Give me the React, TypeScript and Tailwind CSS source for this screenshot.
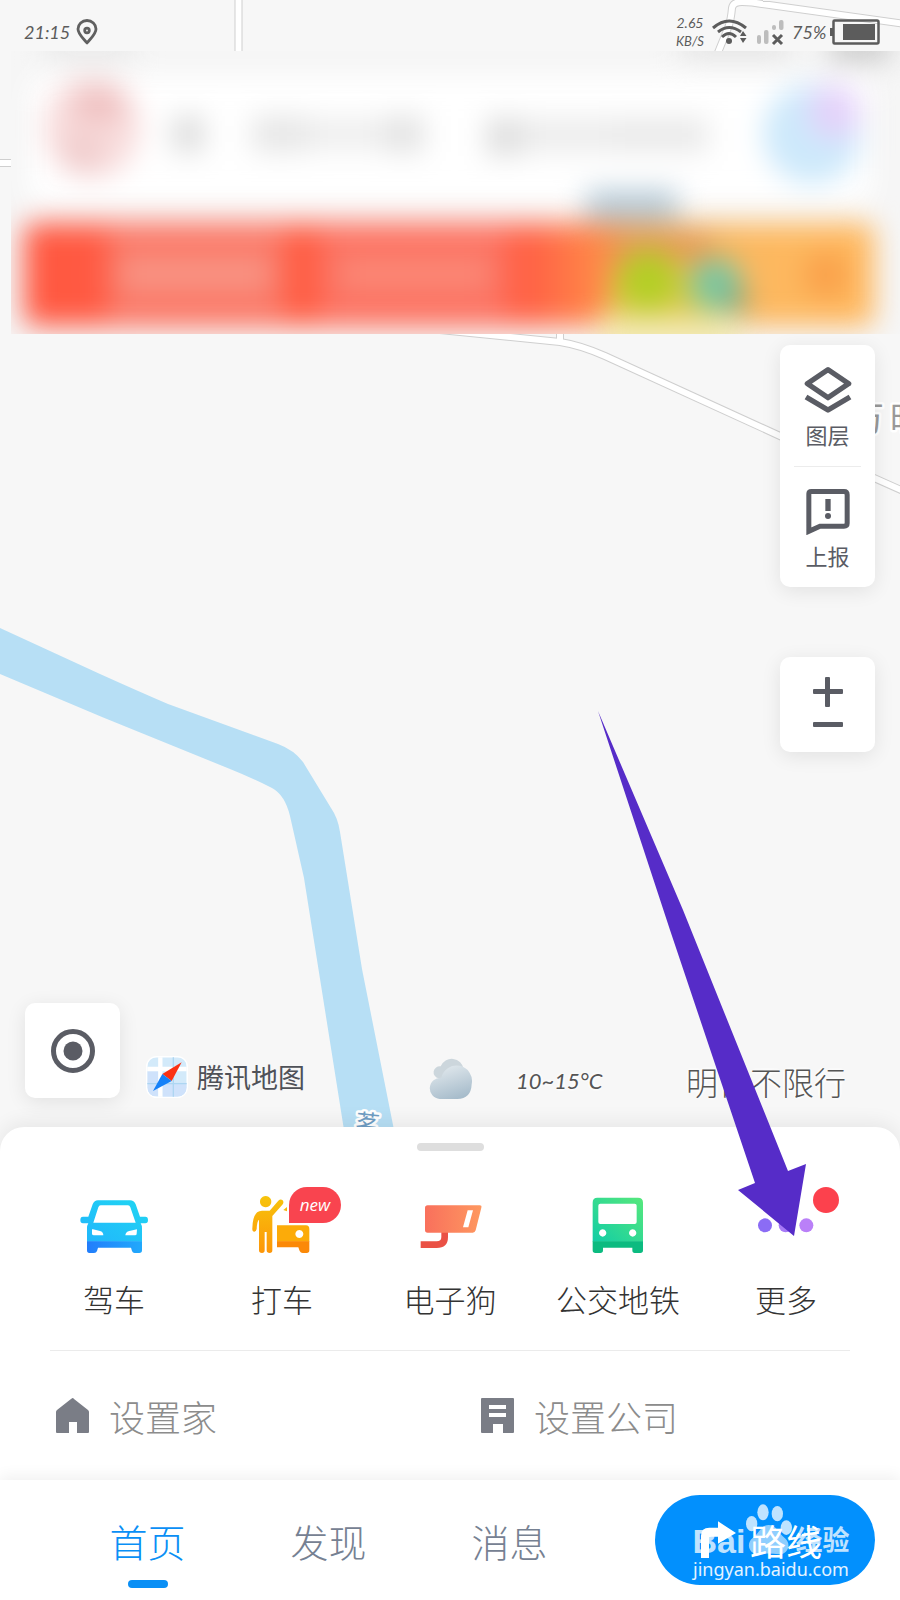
import type { ReactNode } from "react";

const narrow = "font-['Liberation_Sans_Narrow','Lato',sans-serif]";

function MapCanvas() {
  const roads = [
    "M238.500 -5V60",
    "M-5 163H20",
    "M715 60L728 28Q731 20 732 8Q733 2 742 2Q752 2 762 4L905 24",
    "M420 328L560 342Q580 345 605 356L780 436L910 494",
    "M560 325V340",
  ];
  return (
    <svg
      className="absolute inset-0 h-full w-full"
      viewBox="0 0 900 1600"
      preserveAspectRatio="xMidYMin slice"
      aria-hidden="true"
    >
      <g fill="none" stroke="#cfcfcf" strokeWidth="8">
        {roads.map((d) => (
          <path key={d} d={d} />
        ))}
      </g>
      <g fill="none" stroke="#fff" strokeWidth="6">
        {roads.map((d) => (
          <path key={d} d={d} />
        ))}
      </g>
      <path
        fill="#b7dff5"
        d="M0 628L100 674Q140 692 168 704L278 744Q294 750 303 762L331 808Q338 818 340 832L362 969L394 1130H344L304 878L290 816Q285 795 272 788Q250 777 230 769L102 717L0 674Z"
      />
      <g
        fontFamily="'Noto Sans CJK SC', sans-serif"
        stroke="#fff"
        strokeWidth="5"
        paintOrder="stroke"
        strokeLinejoin="round"
      >
        <text x="356" y="1132" fontSize="24" fill="#6f9dc4" transform="rotate(6 368 1120)">
          茗
        </text>
        <text x="850" y="431" fontSize="34" fill="#999">
          万
        </text>
        <text x="890" y="431" fontSize="34" fill="#999">
          旺
        </text>
      </g>
    </svg>
  );
}

function StatusBar() {
  return (
    <header className={`relative flex h-[51px] items-center pt-3 pl-6 pr-5 text-[#5c5c5c] ${narrow}`}>
      <time className="w-[44px] text-[18px] leading-6 italic">21:15</time>
      <svg className="ml-2 h-[26px] w-[22px]" viewBox="0 0 22 26" fill="none" stroke="#606060" strokeWidth="2.800">
        <path d="M11 24C7 19 2 15 2 10A9 8.500 0 0 1 20 10C20 15 15 19 11 24Z" strokeLinejoin="round" />
        <circle cx="11" cy="11.500" r="2.300" />
      </svg>
      <div className="ml-auto flex items-center">
        <div className="flex w-[30px] flex-col items-center text-[14px] leading-[18px] italic">
          <span>2.65</span>
          <span className="text-[13px]">KB/S</span>
        </div>
        <svg className="ml-1.5 h-[28px] w-[37px]" viewBox="0 0 37 28" fill="none" stroke="#5c5c5c" strokeWidth="3">
          <path d="M2 10Q18 -4 35 10M7 14Q18 5 30 14M11 19Q18 12 25 19" />
          <circle cx="18" cy="23" r="3" fill="#5c5c5c" stroke="none" />
          <path d="M29 18L32 13L35.500 18ZM29 20L32 25L35.500 20Z" fill="#5c5c5c" stroke="none" />
        </svg>
        <svg className="ml-2 h-[28px] w-[28px]" viewBox="0 0 28 28" fill="#bdbdbd">
          <rect x="1" y="17" width="4" height="9" rx="2" />
          <rect x="8" y="12" width="4.500" height="14" rx="2" />
          <rect x="16" y="7" width="4" height="5" rx="2" />
          <rect x="23" y="2" width="4.500" height="10" rx="2" />
          <path d="M17 17L26 26M26 17L17 26" stroke="#5c5c5c" strokeWidth="3" />
        </svg>
        <span className="ml-2 w-[38px] text-[18px] leading-6 italic">75%</span>
        <svg className="h-[26px] w-[50px]" viewBox="0 0 50 26">
          <path d="M3.500 2.500V23.500Q3.500 24.500 4.500 24.500H47Q48.500 24.500 48.500 23V3Q48.500 1.500 47 1.500H4.500Q3.500 1.500 3.500 2.500Z" fill="none" stroke="#5c5c5c" strokeWidth="2.500" />
          <rect x="0" y="9" width="3" height="8" fill="#5c5c5c" />
          <rect x="13" y="5" width="32" height="16" fill="#5c5c5c" />
        </svg>
      </div>
    </header>
  );
}

function FrostedHeader() {
  return (
    <svg
      className="relative ml-[11px] block h-[283px] w-[calc(100%-11px)]"
      viewBox="11 51 889 283"
      preserveAspectRatio="none"
      aria-hidden="true"
    >
      <defs>
        <filter id="soft" filterUnits="userSpaceOnUse" x="-80" y="-40" width="1080" height="480" colorInterpolationFilters="sRGB">
          <feGaussianBlur stdDeviation="14" />
        </filter>
        <linearGradient id="banner" gradientUnits="userSpaceOnUse" x1="22" y1="0" x2="872" y2="0">
          <stop offset="0" stopColor="#ff5841" />
          <stop offset="0.600" stopColor="#ff6246" />
          <stop offset="0.680" stopColor="#ff8a48" />
          <stop offset="0.780" stopColor="#f3b45e" />
          <stop offset="0.860" stopColor="#fcb860" />
          <stop offset="1" stopColor="#ffb75c" />
        </linearGradient>
      </defs>
      <rect x="11" y="51" width="889" height="283" fill="#f6f6f6" />
      <g filter="url(#soft)">
        <rect x="28" y="76" width="844" height="128" rx="14" fill="#fff" />
        <rect x="45" y="36" width="90" height="20" fill="#e4e4e4" />
        <rect x="680" y="34" width="110" height="22" fill="#e0e0e0" />
        <rect x="830" y="34" width="60" height="26" fill="#c4c4c4" />
        <ellipse cx="92" cy="128" rx="48" ry="50" fill="#f8dcdc" />
        <ellipse cx="99" cy="104" rx="28" ry="18" fill="#efc0c0" />
        <ellipse cx="82" cy="152" rx="20" ry="20" fill="#f0cccc" />
        <rect x="172" y="116" width="32" height="36" fill="#dcdcdc" />
        <rect x="252" y="116" width="56" height="36" fill="#e6e6e6" />
        <rect x="308" y="118" width="80" height="32" fill="#eeeeee" />
        <rect x="386" y="116" width="38" height="36" fill="#e2e2e2" />
        <rect x="486" y="118" width="36" height="38" fill="#dedede" />
        <rect x="522" y="118" width="90" height="34" fill="#ececec" />
        <rect x="612" y="118" width="96" height="34" fill="#e9e9e9" />
        <ellipse cx="812" cy="134" rx="49" ry="50" fill="#cde9fb" />
        <ellipse cx="834" cy="112" rx="26" ry="28" fill="#e4d2fa" />
        <rect x="24" y="223" width="850" height="103" rx="10" fill="url(#banner)" />
        <rect x="108" y="228" width="176" height="92" fill="#fa7a69" />
        <rect x="120" y="260" width="150" height="28" fill="#f99787" />
        <rect x="320" y="228" width="186" height="92" fill="#fc7363" />
        <rect x="340" y="260" width="150" height="28" fill="#fa8a78" />
        <rect x="586" y="190" width="92" height="32" fill="#b5c9d6" />
        <rect x="610" y="230" width="100" height="30" fill="#e49c56" />
        <rect x="600" y="312" width="140" height="60" fill="#f4ebb8" />
        <rect x="610" y="270" width="110" height="48" fill="#e0c850" />
        <circle cx="648" cy="280" r="30" fill="#b3cf25" />
        <circle cx="716" cy="284" r="26" fill="#79c7a3" />
        <circle cx="736" cy="303" r="11" fill="#7a9b75" />
        <circle cx="826" cy="275" r="22" fill="#f99f49" />
      </g>
    </svg>
  );
}

function SideButton({ label, children }: { label: string; children: ReactNode }) {
  return (
    <button type="button" className="flex h-[121px] flex-col items-center pt-[21px] text-[22px] leading-7 text-[#5a5c64]">
      {children}
      <span className="mt-1.5">{label}</span>
    </button>
  );
}

const card = "rounded-[10px] bg-white shadow-[0_4px_20px_rgba(0,0,0,0.090)]";

function MapControls() {
  return (
    <div className="flex flex-col items-end gap-[70px] pt-[11px] pr-[25px]">
      <div className={`flex w-[95px] flex-col ${card}`}>
        <SideButton label="图层">
          <svg className="h-[48px] w-[48px]" viewBox="0 0 144 144" fill="none" stroke="#5a5c64" strokeWidth="16" strokeLinejoin="round">
            <path d="M72 11L134 53L72 95L10 53Z" />
            <path d="M6 93L72 132L138 93" />
          </svg>
        </SideButton>
        <hr className="mx-3.5 -mb-px border-[#ececec]" />
        <SideButton label="上报">
          <svg className="h-[48px] w-[48px]" viewBox="0 0 144 144">
            <path d="M14.500 20.500Q14.500 13.500 22 13.500H120Q129.500 13.500 129.500 23V109Q129.500 117.500 120 117.500H48L14.500 133Z" fill="none" stroke="#5a5c64" strokeWidth="15" />
            <path d="M64 36H80V72H64Z" fill="#5a5c64" />
            <circle cx="72" cy="87" r="9" fill="#5a5c64" />
          </svg>
        </SideButton>
      </div>
      <div className={`flex w-[95px] flex-col items-center py-[15px] ${card}`}>
        <button type="button" aria-label="放大" className="flex h-10 w-full items-center justify-center">
          <svg className="h-[30px] w-[30px]" viewBox="0 0 30 30" fill="#5a5c64">
            <rect x="12" y="0" width="5" height="30" rx="1" />
            <rect x="0" y="12" width="30" height="5" rx="1" />
          </svg>
        </button>
        <button type="button" aria-label="缩小" className="flex h-[25px] w-full items-center justify-center">
          <svg className="h-[5px] w-[30px]" viewBox="0 0 30 5" fill="#5a5c64">
            <rect width="30" height="5" rx="1" />
          </svg>
        </button>
      </div>
    </div>
  );
}

function MapFooter() {
  const halo = "[text-shadow:0_0_4px_#fff,0_0_4px_#fff,0_0_4px_#fff]";
  return (
    <div className="mt-auto flex items-end pb-[22px] pl-[25px] pr-[54px]">
      <button type="button" aria-label="定位" className={`mb-[7px] flex h-[95px] w-[95px] items-center justify-center ${card}`}>
        <svg className="h-[44px] w-[44px]" viewBox="0 0 44 44">
          <circle cx="22" cy="22" r="19.500" fill="none" stroke="#5a5c64" strokeWidth="5" />
          <circle cx="22" cy="22" r="9.500" fill="#5a5c64" />
        </svg>
      </button>
      <div className="mb-[7px] ml-[26px] flex items-center gap-[9px]">
        <svg className="h-[42px] w-[42px]" viewBox="438 230 126 126">
          <rect x="438" y="230" width="126" height="126" rx="32" fill="#fff" />
          <clipPath id="logoClip">
            <rect x="442" y="234" width="118" height="118" rx="28" />
          </clipPath>
          <g clipPath="url(#logoClip)">
            <rect x="442" y="234" width="118" height="118" fill="#d3eafa" />
            <path d="M442 276H474V350H442ZM488 310H560V352H488Z" fill="#cfe2fb" />
            <path d="M481 230V356M438 269H564" stroke="#fff" strokeWidth="13" />
            <path d="M520 230V356M438 313H564" stroke="#add6f2" strokeWidth="4" />
          </g>
          <path d="M545 249L487 284L515 305Z" fill="#fb3213" />
          <path d="M459 335L487 284L515 305Z" fill="#1581f8" />
        </svg>
        <span className="text-[27px] leading-10 text-[#4f5158]">腾讯地图</span>
      </div>
      <div className={`ml-auto flex items-center text-[#555] ${halo}`}>
        <svg className="h-[48px] w-[48px]" viewBox="80 60 144 144">
          <defs>
            <linearGradient id="cloudFront" x1="0.200" y1="0" x2="0.600" y2="1">
              <stop offset="0" stopColor="#e3eaee" />
              <stop offset="1" stopColor="#a7bccb" />
            </linearGradient>
          </defs>
          <path d="M118 124A18 18 0 1 1 124 88A36 36 0 0 1 193 96L180 124Z" fill="#ccd6dc" />
          <path d="M121 186A32 32 0 1 1 126 122A46 46 0 0 1 217 142Q215 186 174 186Z" fill="url(#cloudFront)" />
        </svg>
        <span className={`ml-[42px] w-[92px] text-[22px] leading-10 italic ${narrow}`}>10~15°C</span>
        <span className="ml-[78px] text-[32px] leading-10 font-light">明日不限行</span>
      </div>
    </div>
  );
}

function CarIcon() {
  return (
    <svg className="h-[70px] w-[70px]" viewBox="87 50 210 210">
      <defs>
        <linearGradient id="carTop" x1="0" y1="1" x2="1" y2="0">
          <stop offset="0" stopColor="#21b5fc" />
          <stop offset="1" stopColor="#20d6f2" />
        </linearGradient>
        <linearGradient id="carBase" x1="0" y1="0" x2="1" y2="0">
          <stop offset="0" stopColor="#227dfb" />
          <stop offset="1" stopColor="#21a9fc" />
        </linearGradient>
      </defs>
      <path
        fill="url(#carTop)"
        fillRule="evenodd"
        d="M144 90H240Q252 90 257 102L270 139H286Q294 139 294 149Q294 159 286 159H272Q276 165 276 174V214H111V174Q111 165 115 159H99Q91 159 91 149Q91 139 99 139H115L128 102Q133 90 144 90ZM152 105Q147 105 145 111L130 157H257L241 111Q239 105 234 105ZM126 177V190Q126 195 132 195H160Q160 184 150 182L129 177ZM261 177L238 182Q227 184 226 195H255Q260 195 260 190Z"
      />
      <path fill="url(#carBase)" d="M111 213H276V240Q276 248 268 248H254Q248 248 246 242L243 232H144L141 242Q139 248 132 248H118Q111 248 111 240Z" />
    </svg>
  );
}

function TaxiIcon() {
  return (
    <span className="relative block">
      <svg className="h-[70px] w-[70px]" viewBox="591 50 210 210">
        <defs>
          <linearGradient id="taxi" x1="0" y1="0" x2="0" y2="1">
            <stop offset="0" stopColor="#f7c40c" />
            <stop offset="1" stopColor="#fd9608" />
          </linearGradient>
        </defs>
        <path
          fill="url(#taxi)"
          d="M647 77A17 17 0 1 1 646.900 77ZM636 121H659L685 91Q692 84 698 90Q703 96 697 103L667 137V240Q667 248 659 248Q650 248 650 240V185H644V240Q644 248 636 248Q627 248 627 240V148Q621 152 620 176Q619 184 612 184Q606 183 607 174Q608 121 636 121Z"
        />
        <path fill="#fcab09" fillRule="evenodd" d="M681 165H768Q778 165 778 176V214H681ZM748 179A12 12 0 1 0 748.100 179Z" />
        <path fill="#fb8908" d="M681 213H778V240Q778 248 770 248H758Q752 248 749 242L745 231H681Z" />
        <path fill="#f7b80c" d="M700 119L711 110V123Z" />
      </svg>
      <span className="absolute top-0 left-[42px] flex h-9 w-[52px] items-center justify-center rounded-t-[18px] rounded-br-[18px] bg-[#f9444f] font-['Open_Sans',sans-serif] text-[17px] leading-6 font-medium text-white italic">
        new
      </span>
    </span>
  );
}

function CameraIcon() {
  return (
    <svg className="h-[70px] w-[70px]" viewBox="105 50 210 210">
      <defs>
        <linearGradient id="cam" x1="0" y1="0" x2="1" y2="0">
          <stop offset="0" stopColor="#f9705c" />
          <stop offset="1" stopColor="#fe9860" />
        </linearGradient>
      </defs>
      <path d="M122 223H170Q194 223 194 200V184" fill="none" stroke="#ea5145" strokeWidth="20" />
      <path fill="url(#cam)" fillRule="evenodd" d="M143 105H299Q306 105 304 112L287 180Q285 187 278 187H143Q135 187 135 179V113Q135 105 143 105ZM263 120L249 171H265L279 120Z" />
    </svg>
  );
}

function BusIcon() {
  return (
    <svg className="h-[70px] w-[70px]" viewBox="609 50 210 210">
      <defs>
        <linearGradient id="bus" x1="0" y1="1" x2="1" y2="0">
          <stop offset="0" stopColor="#11cda5" />
          <stop offset="1" stopColor="#57e87c" />
        </linearGradient>
      </defs>
      <path
        fill="url(#bus)"
        fillRule="evenodd"
        d="M652 82H774Q789 82 789 97V214H638V97Q638 82 652 82ZM661 100Q655 100 655 106V155Q655 161 661 161H764Q770 161 770 155V106Q770 100 764 100ZM668 177A11 11 0 1 0 668.100 177ZM758 177A11 11 0 1 0 758.100 177Z"
      />
      <path fill="#0cbb80" d="M638 213H789V240Q789 248 781 248H764Q757 248 757 240V232H669V240Q669 248 661 248H646Q638 248 638 240Z" />
    </svg>
  );
}

function MoreIcon() {
  return (
    <span className="relative block">
      <svg className="h-[70px] w-[70px]" viewBox="1113 50 210 210">
        <circle cx="1155" cy="165" r="21" fill="#8b6cf5" />
        <circle cx="1217" cy="165" r="21" fill="#a77af7" />
        <circle cx="1279" cy="165" r="21" fill="#ba80f8" />
      </svg>
      <span className="absolute top-0 left-[62px] h-[26px] w-[26px] rounded-full bg-[#fc414d]" />
    </span>
  );
}

const shortcuts = [
  { label: "驾车", icon: <CarIcon /> },
  { label: "打车", icon: <TaxiIcon /> },
  { label: "电子狗", icon: <CameraIcon /> },
  { label: "公交地铁", icon: <BusIcon /> },
  { label: "更多", icon: <MoreIcon /> },
];

function BottomSheet() {
  return (
    <section className="relative flex flex-col rounded-t-[24px] bg-white pt-4 shadow-[0_-4px_20px_rgba(0,0,0,0.070)]">
      <div className="mx-auto h-2 w-[67px] rounded-full bg-[#dedede]" />
      <div className="mt-9 grid grid-cols-5 px-[30px]">
        {shortcuts.map(({ label, icon }) => (
          <button key={label} type="button" className="flex flex-col items-center text-[31px] leading-10 font-light whitespace-nowrap text-[#333]">
            {icon}
            <span className="mt-[22px]">{label}</span>
          </button>
        ))}
      </div>
      <hr className="mx-[50px] mt-[31px] border-[#ebebeb]" />
      <div className="grid h-[129px] grid-cols-2 items-center pl-[56px] pr-[50px] text-[36px] leading-[48px] font-light text-[#8c8c8c]">
        <button type="button" className="flex items-center gap-5">
          <svg className="h-[35px] w-[33px]" viewBox="0 0 33 35" fill="#7a7d86">
            <path d="M16.500 0Q17.500 0 18 1L32 12Q33 13 33 14V34Q33 35 32 35H21V24H13V35H1Q0 35 0 34V14Q0 13 1 12L15 1Z" />
          </svg>
          设置家
        </button>
        <button type="button" className="flex items-center gap-5 pl-7">
          <svg className="h-[35px] w-[33px]" viewBox="0 0 33 35" fill="#7a7d86">
            <path fillRule="evenodd" d="M1 0H32Q33 0 33 1V34Q33 35 32 35H22V26H12V35H1Q0 35 0 34V1Q0 0 1 0ZM8 7V11H25V7ZM8 15V19H25V15Z" />
          </svg>
          设置公司
        </button>
      </div>
    </section>
  );
}

function Watermark() {
  return (
    <div className="pointer-events-none absolute inset-x-0 bottom-1 flex flex-col items-center pl-3 text-white/75" aria-hidden="true">
      <div className="flex items-end font-['Liberation_Sans','Noto_Sans_CJK_SC',sans-serif] text-[34px] leading-8 font-bold">
        <span>Bai</span>
        <svg className="h-[54px] w-[50px]" viewBox="435 98 150 162" fill="currentColor">
          <ellipse cx="455" cy="160" rx="17" ry="23" />
          <ellipse cx="489" cy="126" rx="17" ry="24" />
          <ellipse cx="532" cy="130" rx="17" ry="23" />
          <ellipse cx="559" cy="172" rx="17" ry="22" />
          <path fillOpacity="0.750" d="M506 164C530 164 533 186 555 204C576 222 563 253 536 252C515 249 497 249 477 252C449 253 436 222 457 204C480 186 482 164 506 164Z" />
        </svg>
        <span className="text-[27px]">经验</span>
      </div>
      <span className="font-['Noto_Sans',sans-serif] text-[18px] leading-6 text-white/90">jingyan.baidu.com</span>
    </div>
  );
}

function TabBar() {
  const tabs = ["首页", "发现", "消息"];
  return (
    <nav className="relative flex h-[120px] items-center gap-[55px] bg-white pl-[57px] pr-[25px] shadow-[0_-4px_14px_rgba(0,0,0,0.060)]">
      <div className="flex flex-1">
        {tabs.map((tab, i) => (
          <a
            key={tab}
            href="#"
            className={
              i === 0
                ? "relative flex h-[120px] flex-1 items-center justify-center text-[38px] font-light text-[#0a8ff5]"
                : "relative flex h-[120px] flex-1 items-center justify-center text-[38px] font-light text-[#768192]"
            }
          >
            {tab}
            {i === 0 && <span className="absolute bottom-3 h-2 w-10 rounded-full bg-[#0a8ff5]" />}
          </a>
        ))}
      </div>
      <button type="button" className="relative flex h-[90px] w-[220px] items-center justify-center gap-3.5 rounded-full bg-[#0290fd] pr-2 text-[36px] leading-10 text-white">
        <svg className="h-[38px] w-[36px]" viewBox="300 154 108 114" fill="#fff">
          <path d="M303 265V198Q303 174 328 174H354V155L408 190L354 222V201H333Q327 201 327 207V265Z" />
        </svg>
        路线
        <Watermark />
      </button>
    </nav>
  );
}

function PointerArrow() {
  return (
    <svg className="pointer-events-none absolute inset-0 h-full w-full" viewBox="0 0 900 1600" preserveAspectRatio="xMidYMax slice" aria-hidden="true">
      <path fill="#562cc8" d="M598 711L683 910L788 1171L806 1164L794 1236L738 1190L755 1183L670 930Z" />
    </svg>
  );
}

export default function App() {
  return (
    <main className="relative flex min-h-screen flex-col overflow-hidden bg-[#f7f7f7] font-['Noto_Sans_CJK_SC',sans-serif]">
      <MapCanvas />
      <StatusBar />
      <FrostedHeader />
      <div className="relative flex flex-1 flex-col">
        <MapControls />
        <MapFooter />
      </div>
      <BottomSheet />
      <TabBar />
      <PointerArrow />
    </main>
  );
}
